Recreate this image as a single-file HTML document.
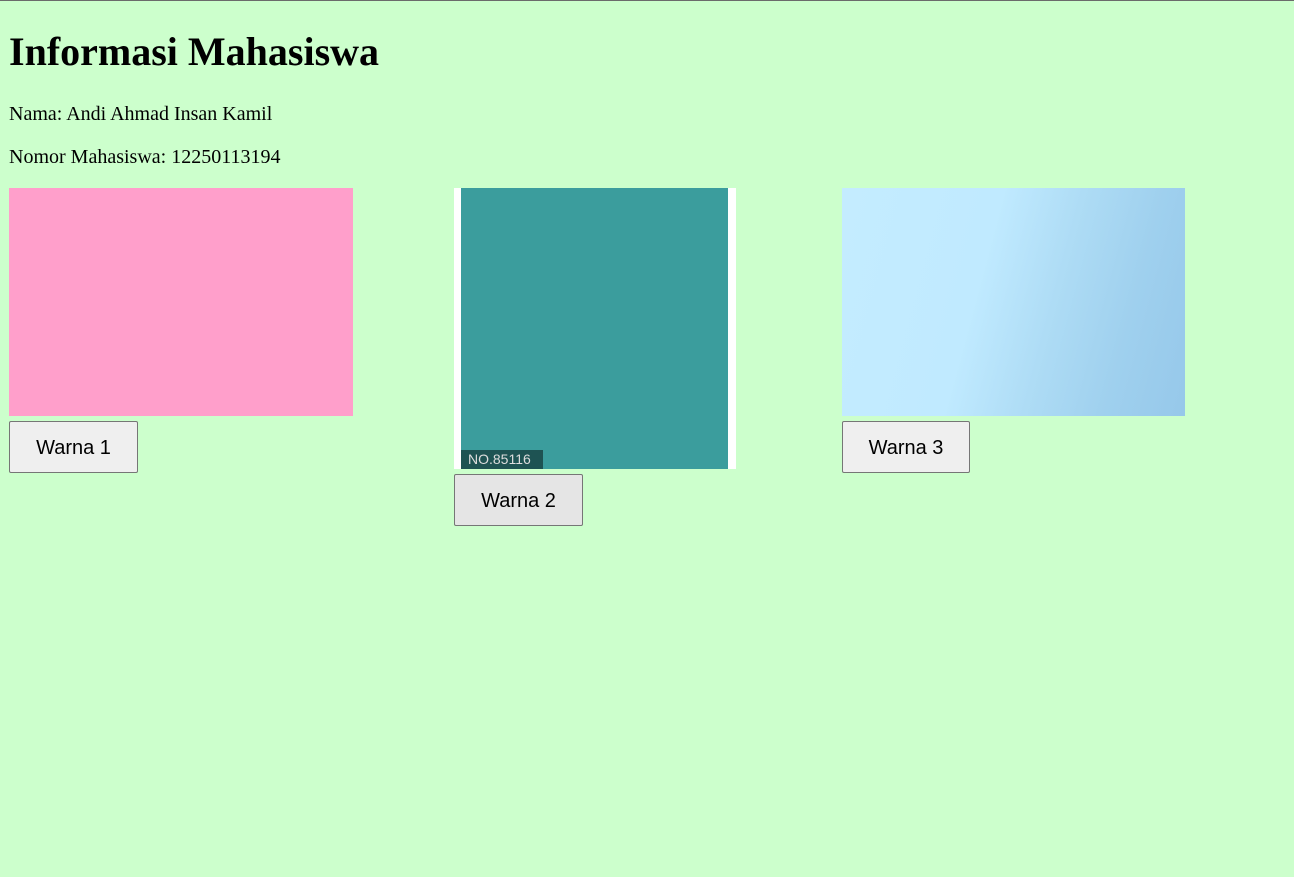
<!DOCTYPE html>
<html><head><style>
html,body{margin:0;padding:0;width:1294px;height:877px;background:#ccffcc;overflow:hidden;position:relative}
.top{position:absolute;left:0;top:0;width:1294px;height:1px;background:#6b6b6b}
.a{position:absolute;margin:0;white-space:nowrap;font-family:"Liberation Serif",serif;color:#000}
h1.a{font-size:40px;line-height:40px;font-weight:bold;left:9px;top:32px}
p.a{font-size:20px;line-height:20px;left:9px}
.btn{position:absolute;box-sizing:border-box;border:1px solid #767676;border-radius:2px;background:#efefef;font-family:"Liberation Sans",Arial,sans-serif;font-size:20px;color:#000;display:flex;align-items:center;justify-content:center;padding-top:2px}
</style></head><body>
<div class="top"></div>
<h1 class="a">Informasi Mahasiswa</h1>
<p class="a" style="top:104px">Nama: Andi Ahmad Insan Kamil</p>
<p class="a" style="top:147px">Nomor Mahasiswa: 12250113194</p>
<div style="position:absolute;left:9px;top:188px;width:344px;height:228px;background:#ff9fcb"></div>
<div style="position:absolute;left:454px;top:188px;width:282px;height:281px;background:#fff">
 <div style="position:absolute;left:7px;top:0;width:267px;height:281px;background:#3b9d9d"></div>
 <div style="position:absolute;left:7px;top:262px;width:82px;height:19px;background:#1e5353;color:#ddd;font-family:'Liberation Sans',sans-serif;font-size:14px;line-height:19px;padding-left:7px;box-sizing:border-box">NO.85116</div>
</div>
<div style="position:absolute;left:842px;top:188px;width:343px;height:228px;background:linear-gradient(105deg,#c4ecff 0%,#c0eaff 40%,#aedcf5 60%,#9fd0ee 80%,#96c8ea 100%)"></div>
<div class="btn" style="left:9px;top:421px;width:129px;height:52px">Warna 1</div>
<div class="btn" style="left:454px;top:474px;width:129px;height:52px;background:#e5e5e5">Warna 2</div>
<div class="btn" style="left:842px;top:421px;width:128px;height:52px">Warna 3</div>
</body></html>
